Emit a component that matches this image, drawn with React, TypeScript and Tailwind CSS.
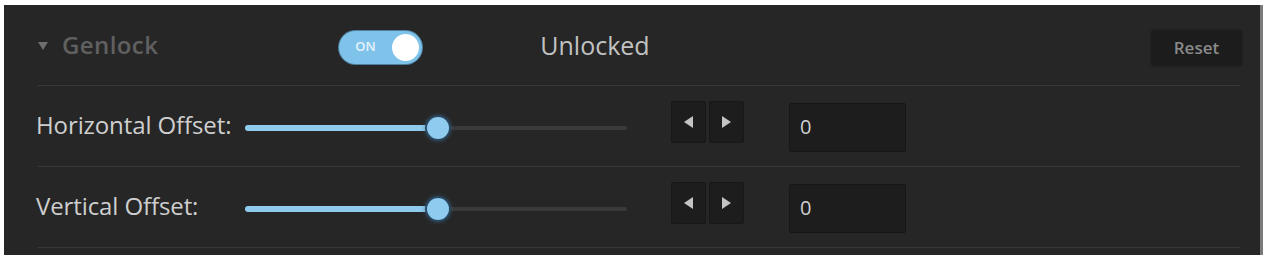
import React from "react";

const font = { fontFamily: '"Open Sans", "Noto Sans", sans-serif' };

const Slider = ({ value }: { value: number }) => (
  <div className="relative w-[382px] h-[24px] flex items-center mt-[4px]">
    <div className="w-full h-[4px] rounded-full bg-[#3a3a3a]" />
    <div
      className="absolute left-0 top-1/2 -translate-y-1/2 h-[6px] rounded-full bg-[#8ecbef]"
      style={{ width: `${value}%` }}
    />
    <div
      className="absolute top-1/2 -translate-y-1/2 -translate-x-1/2 w-[22px] h-[22px] rounded-full bg-[#8ecbef] shadow-[0_0_0_2px_rgba(40,70,95,0.9),0_0_4px_2px_rgba(60,100,130,0.6)]"
      style={{ left: `${value}%` }}
    />
  </div>
);

const ArrowButtons = () => (
  <div className="flex gap-[3px] mb-[8px]">
    <button className="w-[35px] h-[42px] bg-[#1d1d1d] rounded-[3px] flex items-center justify-center shadow-[inset_0_0_0_1px_#181818]">
      <svg width="9" height="12" viewBox="0 0 9 12">
        <polygon points="9,0 9,12 0,6" fill="#c4c4c4" />
      </svg>
    </button>
    <button className="w-[35px] h-[42px] bg-[#1d1d1d] rounded-[3px] flex items-center justify-center shadow-[inset_0_0_0_1px_#181818]">
      <svg width="9" height="12" viewBox="0 0 9 12">
        <polygon points="0,0 0,12 9,6" fill="#c4c4c4" />
      </svg>
    </button>
  </div>
);

const OffsetRow = ({ label }: { label: string }) => (
  <div className="h-[81px] flex items-center border-b border-[#383838]">
    <div className="w-[209px] -ml-[2px] text-[24px] tracking-[-0.1px] text-[#cfcfcf] mb-[3px]">{label}</div>
    <Slider value={50.5} />
    <div className="ml-[44px]">
      <ArrowButtons />
    </div>
    <div className="ml-[45px] w-[117px] h-[49px] mt-[2px] bg-[#1d1d1d] border border-[#161616] rounded-[2px] flex items-center pl-[10px] text-[20px] text-[#d0d0d0]">
      0
    </div>
  </div>
);

export default function App() {
  return (
    <div className="w-[1267px] h-[257px] bg-white pt-[5px] pl-[4px]" style={font}>
      <div className="w-[1259px] h-[250px] bg-[#262626] pl-[34px] pr-[20px] border-r-[3px] border-[#7a7a7a]">
        <div className="h-[81px] flex items-center border-b border-[#383838]">
          <svg width="10" height="8" viewBox="0 0 10 8" className="mt-[2px]">
            <polygon points="0,0 10,0 5,8" fill="#6e6e6e" />
          </svg>
          <span className="ml-[14px] text-[24px] text-[#606060] font-semibold tracking-[0.4px]">
            Genlock
          </span>
          <div className="ml-[181px] w-[83px] h-[33px] mt-[4px] rounded-full bg-[#7fc3ea] shadow-[0_0_0_1px_#4f7f9d] flex items-center justify-between pl-[16px] pr-[3px]">
            <span className="text-[13px] font-semibold text-[#e6f3fb]">ON</span>
            <div className="w-[27px] h-[27px] rounded-full bg-white" />
          </div>
          <span className="ml-[118px] text-[25px] text-[#c2c2c2] mt-[2px]">Unlocked</span>
          <button className="ml-auto -mr-[1px] w-[89px] h-[34px] mt-[5px] bg-[#1c1c1c] rounded-[2px] text-[17px] font-semibold text-[#8a8a8a] shadow-[0_0_2px_1px_#1a1a1a]">
            Reset
          </button>
        </div>
        <OffsetRow label="Horizontal Offset:" />
        <OffsetRow label="Vertical Offset:" />
      </div>
    </div>
  );
}
